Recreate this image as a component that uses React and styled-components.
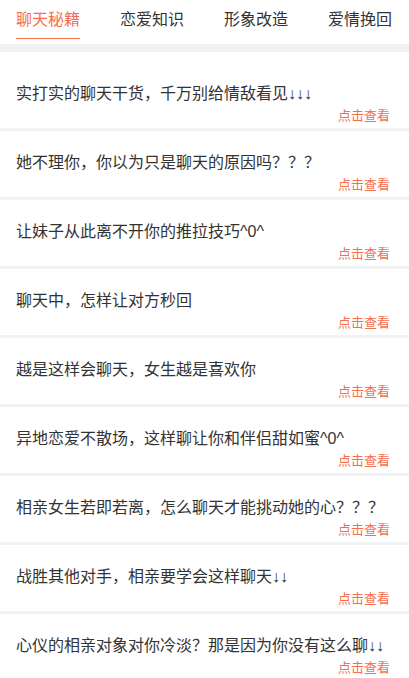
import React from "react";
import styled, { createGlobalStyle } from "styled-components";

const Global = createGlobalStyle`
  html, body { margin: 0; padding: 0; background: #ffffff; }
  body { font-family: "Liberation Sans", "Noto Sans CJK SC", sans-serif; }
`;

const Page = styled.div`
  width: 409px;
  background: #f2f2f2;
  min-height: 678px;
`;

const TabBar = styled.nav`
  display: flex;
  gap: 40px;
  height: 44px;
  padding: 0 16px;
  background: #fff;
  box-sizing: border-box;
  margin-bottom: 8px;
`;

const Tab = styled.div`
  box-sizing: border-box;
  height: 39px;
  padding-top: 10px;
  font-size: 16px;
  line-height: 20px;
  color: ${(p) => (p.$active ? "#f76e4f" : "#333")};
  border-bottom: 1px solid ${(p) => (p.$active ? "#f76e4f" : "transparent")};
  white-space: nowrap;
`;

const List = styled.div`
  display: flex;
  flex-direction: column;
  gap: 3px;
  background: #f2f2f2;
`;

const Item = styled.div`
  background: #fff;
  padding: ${(p) => (p.$first ? "30px" : "20px")} 19px 2px 16px;
`;

const Title = styled.div`
  font-size: 16px;
  line-height: 24px;
  color: #333;
  white-space: nowrap;
`;

const More = styled.div`
  font-size: 13px;
  line-height: 20px;
  color: #f76e4f;
  text-align: right;
`;

const tabs = ["聊天秘籍", "恋爱知识", "形象改造", "爱情挽回"];

const items = [
  "实打实的聊天干货，千万别给情敌看见↓↓↓",
  "她不理你，你以为只是聊天的原因吗？？？",
  "让妹子从此离不开你的推拉技巧^0^",
  "聊天中，怎样让对方秒回",
  "越是这样会聊天，女生越是喜欢你",
  "异地恋爱不散场，这样聊让你和伴侣甜如蜜^0^",
  "相亲女生若即若离，怎么聊天才能挑动她的心？？？",
  "战胜其他对手，相亲要学会这样聊天↓↓",
  "心仪的相亲对象对你冷淡？那是因为你没有这么聊↓↓",
];

export default function App() {
  return (
    <Page>
      <Global />
      <TabBar>
        {tabs.map((t, i) => (
          <Tab key={t} $active={i === 0}>
            {t}
          </Tab>
        ))}
      </TabBar>
      <List>
        {items.map((t, i) => (
          <Item key={i} $first={i === 0}>
            <Title>{t}</Title>
            <More>点击查看</More>
          </Item>
        ))}
      </List>
    </Page>
  );
}
